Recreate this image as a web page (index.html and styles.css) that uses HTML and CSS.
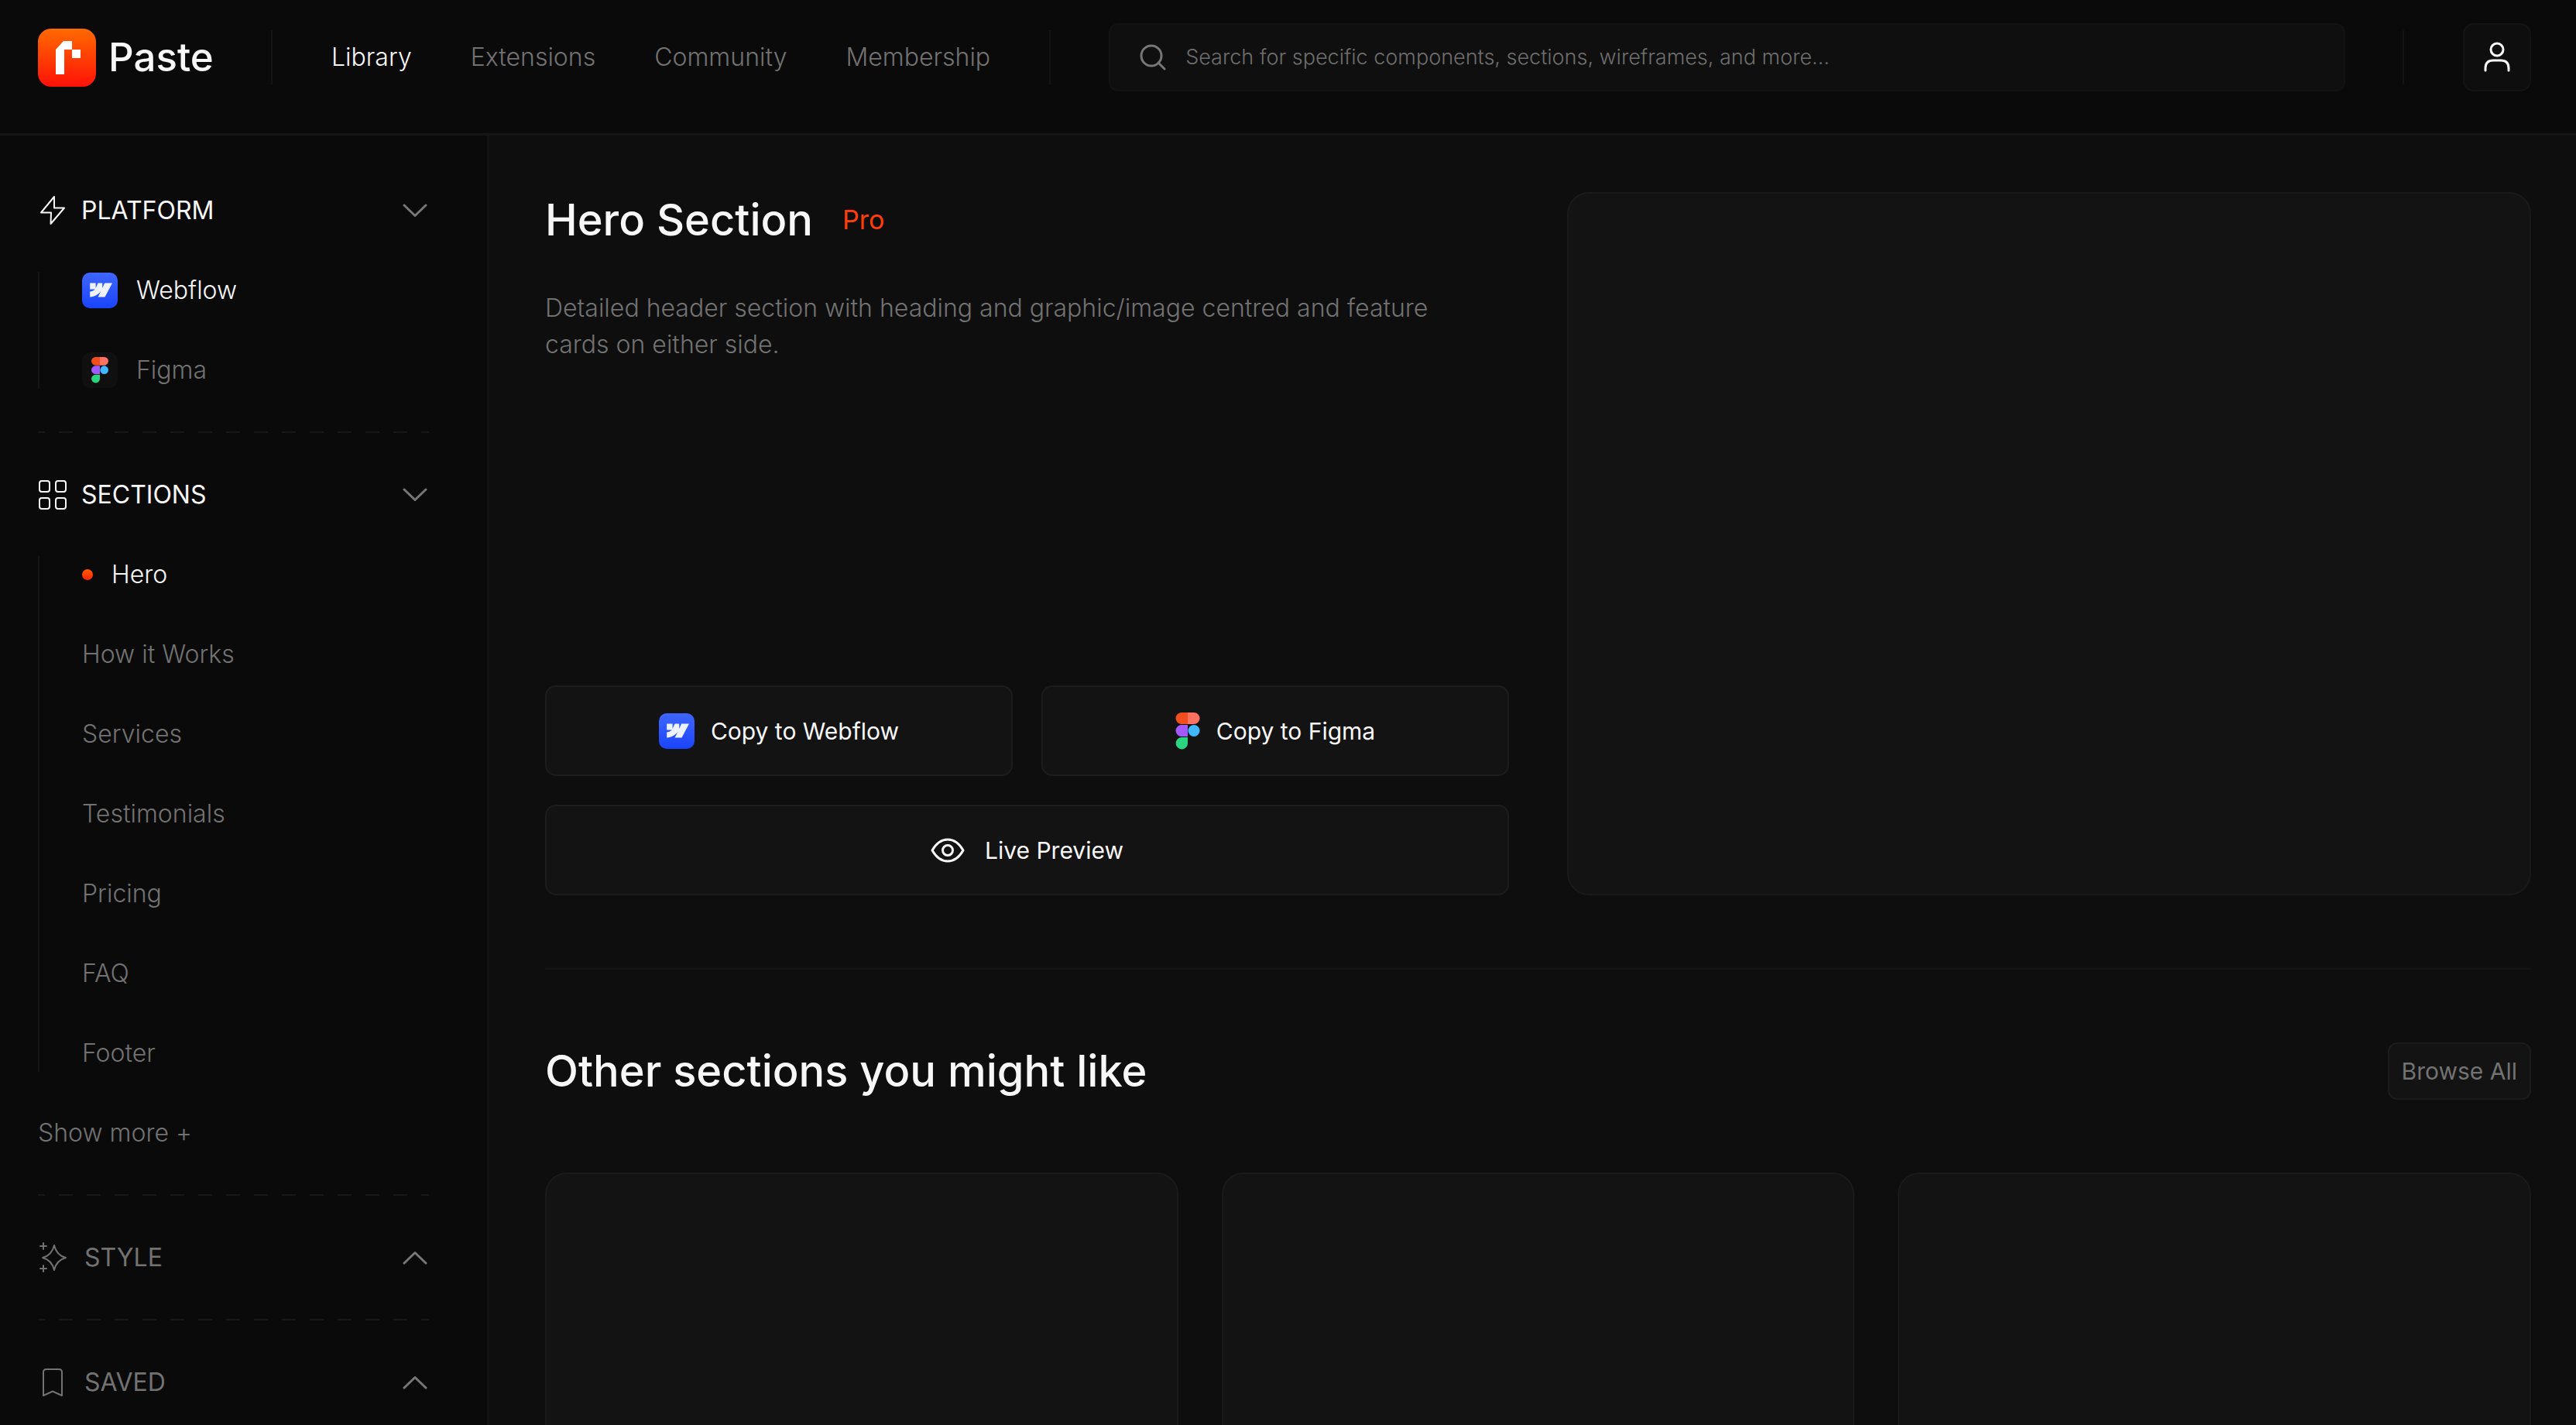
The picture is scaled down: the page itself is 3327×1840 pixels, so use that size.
FILE: index.html
```html
<!DOCTYPE html>
<html lang="en">
<head>
<meta charset="utf-8">
<meta name="viewport" content="width=device-width, initial-scale=1">
<title>Paste – Hero Section</title>
<link rel="stylesheet" href="styles.css">
</head>
<body>
<svg class="defs" width="0" height="0" aria-hidden="true">
  <defs>
    <linearGradient id="flame" x1="0" y1="0" x2="0" y2="1"><stop offset="0" stop-color="#ff6a00"/><stop offset="1" stop-color="#ff1208"/></linearGradient>
    <linearGradient id="blue" x1="0" y1="0" x2="0" y2="1"><stop offset="0" stop-color="#3f66ff"/><stop offset="1" stop-color="#1a44fb"/></linearGradient>
    <symbol id="webflow" viewBox="0 0 46 46">
      <rect width="46" height="46" rx="10" fill="url(#blue)"/>
      <path fill="#eef2ff" d="M39 13.500 29.500 31.500H20.600L24.300 24C21.300 28 16.700 31 10.200 31.500V24.500S14.300 24.200 16.800 21.500H10.200V13.500H17.600V20.100L20.600 13.500H26.200V20.100L29.200 13.500Z"/>
    </symbol>
    <symbol id="figma" viewBox="0 0 32 48">
      <path fill="#f24e1e" d="M8 0H16V15H8A7.500 7.500 0 0 1 8 0Z"/>
      <path fill="#ff7262" d="M16 0H24A7.500 7.500 0 0 1 24 15H16Z"/>
      <path fill="#a259ff" d="M8 16H16V31H8A7.500 7.500 0 0 1 8 16Z"/>
      <circle fill="#3fb8ff" cx="24" cy="23.500" r="7.500"/>
      <path fill="#2bd57f" d="M8 32H16V39.500A7.700 7.700 0 1 1 8 32Z"/>
    </symbol>
    <symbol id="chevron" viewBox="0 0 32 18"><path d="M2 2 16 15.500 30 2" fill="none" stroke="currentColor" stroke-width="3" stroke-linecap="round" stroke-linejoin="round"/></symbol>
  </defs>
</svg>

<header class="topbar">
  <a class="brand" href="#">
    <svg class="brand-mark" viewBox="0 0 75 75" aria-hidden="true"><rect width="75" height="75" rx="17" fill="url(#flame)"/><path fill="#fff" d="M23 27 33 16H44V27H55V38H44V27H34V59H23Z"/></svg>
    <span>Paste</span>
  </a>
  <nav class="nav" aria-label="Main">
    <a class="active" href="#">Library</a>
    <a href="#">Extensions</a>
    <a href="#">Community</a>
    <a href="#">Membership</a>
  </nav>
  <form class="search" role="search">
    <label class="search-box">
      <svg class="icon-search" viewBox="0 0 34 34" aria-hidden="true"><circle cx="15" cy="15" r="13" fill="none" stroke="currentColor" stroke-width="3"/><path d="m24 24 8 8" stroke="currentColor" stroke-width="3" stroke-linecap="round"/></svg>
      <input type="search" placeholder="Search for specific components, sections, wireframes, and more..." aria-label="Search">
    </label>
  </form>
  <button class="account" type="button" aria-label="Account">
    <svg viewBox="0 0 34 40" aria-hidden="true"><g fill="none" stroke="currentColor" stroke-width="3" stroke-linecap="round"><circle cx="17" cy="10" r="8"/><path d="M2 37V34Q2 24 12 24H22Q32 24 32 34V37"/></g></svg>
  </button>
</header>

<div class="layout">
  <aside class="sidebar">
    <section class="group">
      <button class="group-head open" type="button" aria-expanded="true">
        <svg class="group-icon" viewBox="0 0 40 40" aria-hidden="true"><path d="M21 2 4 22.500H17L16.500 37 34 16.500H21Z" fill="none" stroke="currentColor" stroke-width="2" stroke-linejoin="round"/></svg>
        <span>PLATFORM</span>
        <svg class="chevron" aria-hidden="true"><use href="#chevron"/></svg>
      </button>
      <ul class="links">
        <li><a class="active" href="#"><svg class="tile" aria-hidden="true"><use href="#webflow"/></svg>Webflow</a></li>
        <li><a href="#"><span class="tile dark"><svg aria-hidden="true"><use href="#figma"/></svg></span>Figma</a></li>
      </ul>
    </section>
    <section class="group">
      <button class="group-head open" type="button" aria-expanded="true">
        <svg class="group-icon" viewBox="0 0 40 40" aria-hidden="true"><g fill="none" stroke="currentColor" stroke-width="2"><rect x="2" y="2" width="13" height="14" rx="3"/><rect x="23" y="2" width="13" height="14" rx="3"/><rect x="2" y="24" width="13" height="14" rx="3"/><rect x="23" y="24" width="13" height="14" rx="3"/></g></svg>
        <span>SECTIONS</span>
        <svg class="chevron" aria-hidden="true"><use href="#chevron"/></svg>
      </button>
      <ul class="links">
        <li><a class="active current" href="#">Hero</a></li>
        <li><a href="#">How it Works</a></li>
        <li><a href="#">Services</a></li>
        <li><a href="#">Testimonials</a></li>
        <li><a href="#">Pricing</a></li>
        <li><a href="#">FAQ</a></li>
        <li><a href="#">Footer</a></li>
      </ul>
      <button class="more" type="button">Show more +</button>
    </section>
    <section class="group">
      <button class="group-head" type="button" aria-expanded="false">
        <svg class="group-icon" viewBox="0 0 40 40" aria-hidden="true"><g fill="none" stroke="currentColor" stroke-width="2" stroke-linejoin="round" stroke-linecap="round"><path d="M21 4Q24 17 36 20Q24 23 21 36Q18 23 6 20Q18 17 21 4Z"/><path d="M7 1V9M3 5H11M7 30V38M3 34H11"/></g></svg>
        <span>STYLE</span>
        <svg class="chevron" aria-hidden="true"><use href="#chevron"/></svg>
      </button>
    </section>
    <section class="group">
      <button class="group-head" type="button" aria-expanded="false">
        <svg class="group-icon" viewBox="0 0 40 40" aria-hidden="true"><path d="M7 37V7Q7 3 11 3H27Q31 3 31 7V37L19 31.500Z" fill="none" stroke="currentColor" stroke-width="2" stroke-linejoin="round"/></svg>
        <span>SAVED</span>
        <svg class="chevron" aria-hidden="true"><use href="#chevron"/></svg>
      </button>
    </section>
  </aside>

  <main class="content">
    <section class="detail">
      <div class="info">
        <div class="title"><h1>Hero Section</h1><span class="badge">Pro</span></div>
        <p>Detailed header section with heading and graphic/image centred and feature cards on either side.</p>
        <div class="actions">
          <button type="button"><svg class="tile" aria-hidden="true"><use href="#webflow"/></svg>Copy to Webflow</button>
          <button type="button"><svg class="figma" aria-hidden="true"><use href="#figma"/></svg>Copy to Figma</button>
          <button class="wide" type="button"><svg class="eye" viewBox="0 0 44 32" aria-hidden="true"><g fill="none" stroke="currentColor" stroke-width="3"><path d="M2 16Q10 2 22 2T42 16Q34 30 22 30T2 16Z" stroke-linejoin="round"/><circle cx="22" cy="16" r="6.500"/></g></svg>Live Preview</button>
        </div>
      </div>
      <div class="preview"></div>
    </section>
    <section class="related">
      <div class="related-head">
        <h2>Other sections you might like</h2>
        <a class="browse" href="#">Browse All</a>
      </div>
      <div class="cards">
        <article class="card"></article>
        <article class="card"></article>
        <article class="card"></article>
      </div>
    </section>
  </main>
</div>
</body>
</html>
```
FILE: styles.css
```css
:root {
  --bar: #0a0a0a;
  --page: #0e0e0e;
  --panel: #131313;
  --line: #1a1a1a;
  --faint: #141414;
  --muted: #727272;
  --text: #f7f7f7;
}

* { box-sizing: border-box; }

body {
  margin: 0;
  height: 100vh;
  overflow: hidden;
  display: flex;
  flex-direction: column;
  background: var(--page);
  color: var(--text);
  font: 300 32px/48px Inter, "Liberation Sans", sans-serif;
}

a { color: inherit; text-decoration: none; }
button, input { font: inherit; color: inherit; background: none; border: 0; padding: 0; }
button { cursor: pointer; }
h1, h2, p, ul { margin: 0; padding: 0; }
ul { list-style: none; }
svg { display: block; flex: none; }
.defs { position: absolute; }

.topbar {
  flex: none;
  height: 175px;
  padding: 30px 58px 54px 49px;
  display: flex;
  align-items: center;
  background: var(--bar);
  border-bottom: 3px solid #161616;
}

.brand {
  width: 301px;
  display: flex;
  align-items: center;
  gap: 16px;
  font-size: 51px;
  font-weight: 500;
}
.brand-mark { width: 75px; height: 75px; }

.nav {
  height: 70px;
  padding: 0 76px;
  display: flex;
  align-items: center;
  gap: 76px;
  color: var(--muted);
  border: solid var(--faint);
  border-width: 0 2px;
}
.active { color: var(--text); }

.search {
  flex: 1;
  height: 70px;
  margin-right: 76px;
  padding: 0 74px 0 75px;
  display: flex;
  align-items: center;
  border-right: 2px solid var(--faint);
}
.search-box {
  flex: 1;
  height: 88px;
  padding: 0 38px;
  display: flex;
  align-items: center;
  gap: 25px;
  color: #777;
  background: #0f0f0f;
  border: 2px solid #121212;
  border-radius: 12px;
}
.icon-search { width: 34px; height: 34px; }
.search-box input { flex: 1; min-width: 0; font-size: 27px; outline: 0; }
.search-box input::placeholder { color: #6e6e6e; opacity: 1; }

.account {
  width: 88px;
  height: 88px;
  display: grid;
  place-items: center;
  background: #0e0e0e;
  border: 2px solid #141414;
  border-radius: 14px;
}
.account svg { width: 34px; height: 40px; }

.layout { flex: 1; min-height: 0; display: flex; }
.sidebar, .content { overflow-y: auto; scrollbar-width: none; }

.sidebar {
  flex: none;
  width: 632px;
  padding: 0 75px 0 49px;
  background: var(--bar);
  border-right: 3px solid #121212;
}
.group { padding: 73px 0 55px; }
.group + .group {
  padding-top: 58px;
  background: repeating-linear-gradient(90deg, #171717 0 9px, transparent 9px 27px, #171717 27px 36px) top / 100% 2px no-repeat;
}
.group-head {
  width: 100%;
  height: 48px;
  display: flex;
  align-items: center;
  gap: 20px;
  color: var(--muted);
  font-weight: 400;
}
.group-head.open { color: var(--text); gap: 16px; }
.group-icon { width: 40px; height: 40px; }
.chevron { width: 32px; height: 18px; margin: 0 2px 0 auto; color: #777; transform: rotate(180deg); }
.open .chevron { transform: none; }

.links {
  margin-top: 55px;
  padding-left: 55px;
  display: grid;
  gap: 55px;
  color: var(--muted);
  border-left: 2px solid var(--faint);
}
.links a { display: flex; align-items: center; gap: 24px; }
.tile { width: 46px; height: 46px; }
.dark { display: grid; place-items: center; background: #101010; border-radius: 10px; }
.dark svg { width: 24px; height: 34px; }
.current::before { content: ""; width: 14px; height: 14px; border-radius: 50%; background: linear-gradient(#ff5a00, #ff2408); }
.more { display: block; margin-top: 55px; color: var(--muted); }

.content { flex: 1; min-width: 0; padding: 73px 58px 0 72px; }

.detail {
  display: grid;
  grid-template-columns: 1fr 1fr;
  gap: 75px;
  padding-bottom: 94px;
  border-bottom: 2px solid var(--faint);
}
.info { min-height: 908px; display: flex; flex-direction: column; }
.title { height: 72px; display: flex; align-items: center; gap: 38px; }
h1, h2 { font-size: 56px; line-height: 72px; font-weight: 500; }
.badge { color: #ff3d0a; font-size: 34px; font-weight: 400; }
.info p { max-width: 1200px; margin-top: 54px; color: var(--muted); line-height: 47px; }

.actions { margin-top: auto; display: grid; grid-template-columns: 1fr 1fr; gap: 37px; }
.actions button {
  height: 117px;
  display: flex;
  align-items: center;
  justify-content: center;
  gap: 21px;
  font-size: 30px;
  font-weight: 400;
  background: var(--panel);
  border: 2px solid #1c1c1c;
  border-radius: 14px;
}
.actions .wide { grid-column: 1 / -1; gap: 26px; }
.figma { width: 32px; height: 48px; }
.eye { width: 44px; height: 32px; }

.preview, .card { background: var(--panel); border: 2px solid var(--line); border-radius: 28px; }

.related-head { margin-top: 94px; display: flex; align-items: center; justify-content: space-between; }
.browse {
  padding: 11px 16px;
  font-size: 30px;
  font-weight: 400;
  color: var(--muted);
  background: var(--panel);
  border: 2px solid #1c1c1c;
  border-radius: 12px;
}
.cards { margin-top: 94px; display: grid; grid-template-columns: repeat(3, 1fr); gap: 56px; }
.card { height: 596px; }
```
